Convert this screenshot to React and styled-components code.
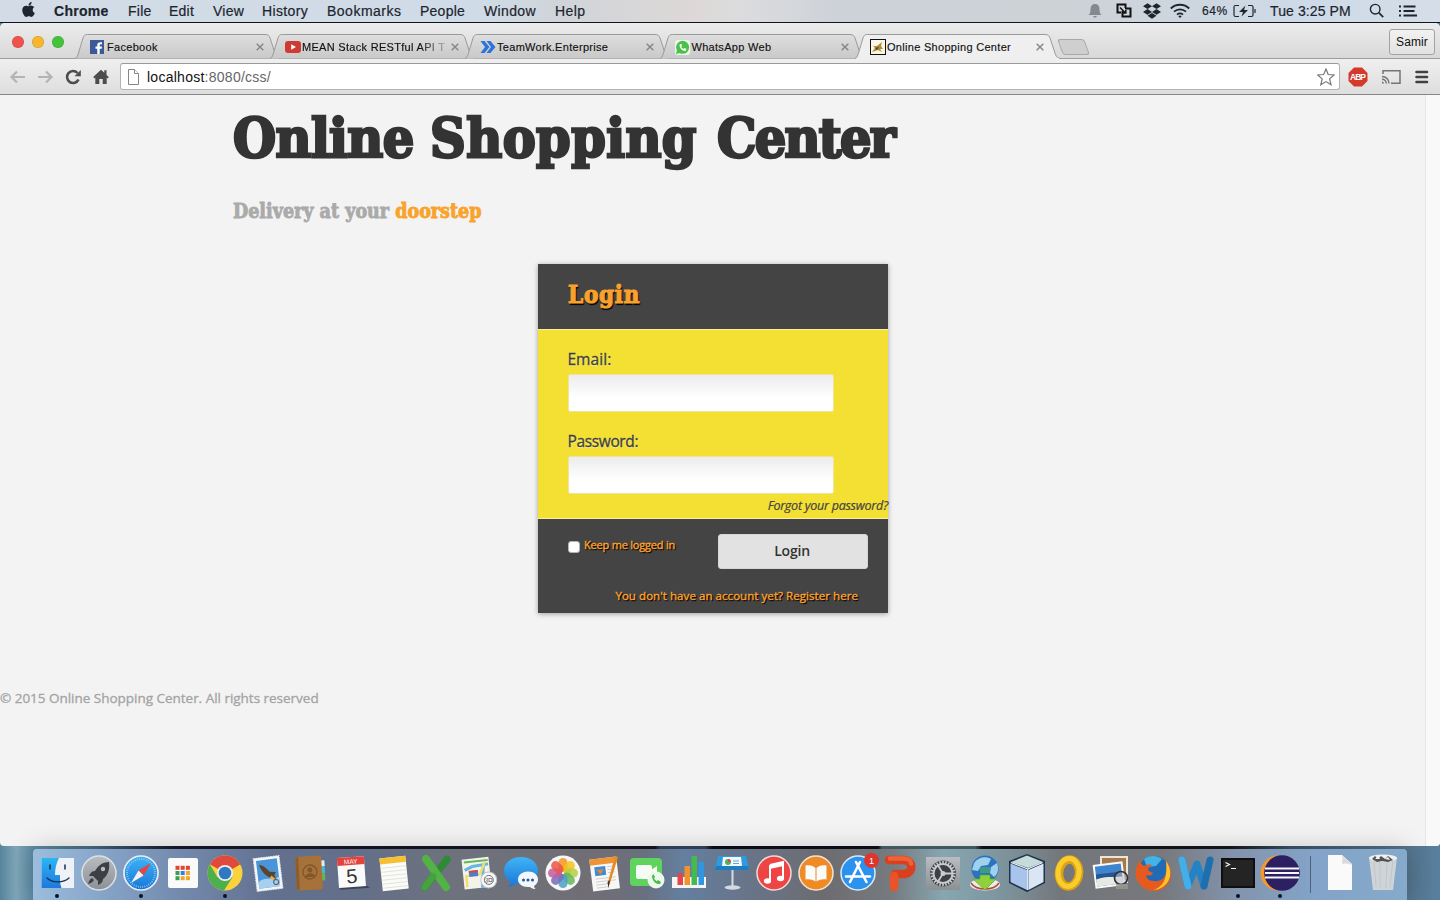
import React from 'react';
import styled, { createGlobalStyle } from 'styled-components';
import { FaApple, FaDropbox } from 'react-icons/fa';

const sans = '"Liberation Sans", Arial, sans-serif';
const humanist = '"Open Sans", "Noto Sans", sans-serif';
const slab = '"DejaVu Serif Condensed", "DejaVu Serif", serif';

const Global = createGlobalStyle`
  * { box-sizing: border-box; }
  body { margin: 0; overflow: hidden; font-family: ${sans}; }
  h1, h2, p { margin: 0; }
  svg { display: block; flex: none; }
`;

const Desktop = styled.div`
  width: 1440px;
  height: 900px;
  overflow: hidden;
  display: flex;
  flex-direction: column;
  background: linear-gradient(90deg, #55849b 0, #7fa6b9 16px, #5d8ba3 33px, #486b82 90px, #151a2b 175px, #11131f 655px, #34455d 660px, #34455d 705px, #0e0f16 712px, #0e0f16 878px, #4a626c 882px, #48606a 975px, #111319 982px, #15161c 1230px, #3c5366 1290px, #54738b 1405px, #58809e 1440px);
`;

/* ---------- menu bar ---------- */
const MenuBar = styled.header`
  height: 23px;
  flex: none;
  display: flex;
  align-items: center;
  padding-left: 20px;
  padding-right: 22px;
  border-bottom: 1px solid #10161e;
  background: linear-gradient(90deg, #d3dce6 0, #cfdbe7 480px, #d0d4d9 560px, #ddd8d7 690px, #dcdcde 740px, #cdd2d8 840px, #cdd2d7 1080px, #cddae7 1300px, #d5dee8 1440px);
  color: #1d252e;
`;
const MenuItem = styled.span`
  width: ${p => p.$w}px;
  margin-right: 19px;
  white-space: nowrap;
  font-size: 14px;
  line-height: 22px;
  letter-spacing: ${p => p.$ls || 0.25}px;
  font-weight: ${p => (p.$bold ? 700 : 400)};
  -webkit-text-stroke: 0.2px #1d252e;
`;
const AppleMark = styled.span`
  width: 34px;
  flex: none;
  margin-top: -3px;
`;
const StatusArea = styled.div`
  margin-left: auto;
  display: flex;
  align-items: center;
`;
const StatusSlot = styled.span`
  width: ${p => p.$w}px;
  display: flex;
  align-items: center;
  font-size: ${p => p.$size || 14}px;
  letter-spacing: ${p => p.$ls || 0}px;
  line-height: 22px;
  white-space: nowrap;
  -webkit-text-stroke: 0.2px #1d252e;
`;

/* ---------- browser window ---------- */
const Window = styled.section`
  height: 823px;
  flex: none;
  display: flex;
  flex-direction: column;
  border-radius: 5px 5px 4px 4px;
  overflow: hidden;
  background: #f3f3f3;
`;
const TabStrip = styled.div`
  height: 36px;
  flex: none;
  display: flex;
  align-items: flex-end;
  background: linear-gradient(#ececec, #d8d8d8);
  box-shadow: inset 0 -1px 0 #9c9c9c;
`;
const Lights = styled.div`
  width: 75px;
  height: 36px;
  padding: 13px 0 0 12px;
  display: flex;
  gap: 8px;
`;
const Light = styled.span`
  width: 12px;
  height: 12px;
  border-radius: 50%;
  background: ${p => p.$c};
  box-shadow: inset 0 0 0 0.5px rgba(0, 0, 0, 0.18);
`;
const Tab = styled.div`
  position: relative;
  z-index: ${p => p.$z};
  width: 210px;
  margin-right: -15px;
  height: 25px;
  flex: none;
  display: flex;
  align-items: center;
  padding: 1px 21px 0 15px;
`;
const TabShape = styled.svg`
  position: absolute;
  left: 0;
  top: 0;
  z-index: -1;
`;
const TabTitle = styled.span`
  flex: 1;
  white-space: nowrap;
  font-size: 11px;
  line-height: 16px;
  letter-spacing: 0.3px;
  margin-left: ${p => p.$gap}px;
  color: #111;
  -webkit-text-stroke: 0.15px #111;
  margin-right: 5px;
  ${p => p.$fade && 'mask-image: linear-gradient(90deg, #000 82%, transparent 104%);'}
`;
const NewTab = styled.span`
  width: 27px;
  height: 16px;
  margin: 0 0 4px 10px;
  border: 1px solid #a9a9a9;
  border-radius: 3px;
  background: #cfcfcf;
  transform: skewX(20deg);
`;
const Profile = styled.button`
  margin: 0 5px 4px auto;
  width: 46px;
  height: 26px;
  padding: 0;
  font: 12px ${sans};
  letter-spacing: 0.1px;
  color: #111;
  border: 1px solid #a2a2a2;
  border-radius: 3px;
  background: linear-gradient(#f2f2f2, #e2e2e2);
`;
const Toolbar = styled.div`
  height: 36px;
  flex: none;
  display: flex;
  align-items: center;
  padding: 0 9px;
  background: linear-gradient(#efefef, #dedede);
  border-bottom: 1px solid #878787;
`;
const NavSlot = styled.span`
  width: 28px;
  flex: none;
`;
const AddressBar = styled.div`
  width: 1220px;
  height: 27px;
  display: flex;
  align-items: center;
  margin-left: -1px;
  padding: 0 4px 0 6px;
  border: 1px solid #b3b3b3;
  border-top-color: #9a9a9a;
  border-radius: 3px;
  background: #fff;
`;
const Url = styled.span`
  flex: 1;
  margin-left: 7px;
  font-size: 14px;
  line-height: 24px;
  letter-spacing: 0.26px;
  color: #666;
  b { font-weight: 400; color: #111; }
`;
const Extensions = styled.div`
  display: flex;
  align-items: center;
  gap: 13px;
  margin-left: 8px;
`;

/* ---------- page ---------- */
const Viewport = styled.div`
  flex: 1;
  display: flex;
`;
const Page = styled.main`
  flex: 1;
  padding-top: 9px;
`;
const ScrollTrack = styled.div`
  width: 15px;
  border-left: 1px solid #e6e6e6;
  background: #f9f9f9;
`;
const Heading = styled.h1`
  display: flex;
  gap: 17px;
  margin-left: 233px;
  font: 700 55px/68px ${slab};
  color: #333;
  white-space: nowrap;
  -webkit-text-stroke: 2.6px #333;
  paint-order: stroke fill;
`;
const Word = styled.span`
  letter-spacing: ${p => p.$ls}px;
  width: ${p => p.$w}px;
`;
const Tagline = styled.h2`
  margin: 28px 0 0 233px;
  font: 700 19.5px/24px ${slab};
  letter-spacing: 0px;
  color: #aaa;
  -webkit-text-stroke: 0.8px currentColor;
  white-space: nowrap;
  span { color: #f9a32a; }
`;
const Card = styled.form`
  width: 350px;
  height: 349px;
  margin: 40px 0 0 538px;
  background: #444;
  box-shadow: 0 1px 5px rgba(0, 0, 0, 0.35);
`;
const CardTitle = styled.h2`
  height: 65px;
  padding: 16px 30px 0;
  font: 700 24px/30px ${slab};
  letter-spacing: 0.7px;
  color: #f9a12e;
  -webkit-text-stroke: 1.1px #f9a12e;
  text-shadow: 1px 1px 1px #000, 1px 2px 1px #000;
`;
const Fields = styled.div`
  height: 190px;
  padding: 18px 0 0 30px;
  background: #f4e032;
  border-top: 1px solid #f8f0a0;
  border-bottom: 1px solid #f8f0a0;
`;
const Label = styled.label`
  display: block;
  height: 26px;
  margin-left: -0.6px;
  font: 400 15.5px/22px ${humanist};
  letter-spacing: ${p => p.$ls || 0}px;
  color: #404040;
  -webkit-text-stroke: 0.3px #404040;
  text-shadow: 0 1px 1px rgba(255, 255, 255, 0.6);
`;
const Input = styled.input`
  display: block;
  width: 266px;
  height: 38px;
  margin-bottom: ${p => p.$mb}px;
  border: 1px solid #eee49a;
  border-radius: 2px;
  background: linear-gradient(#ececee, #fff 65%);
  outline: none;
`;
const Forgot = styled.p`
  text-align: right;
  font: italic 400 12.5px/18px ${humanist};
  letter-spacing: -0.25px;
  color: #444;
  -webkit-text-stroke: 0.2px #444;
  white-space: nowrap;
`;
const Actions = styled.div`
  height: 50px;
  padding: 15px 20px 0 30px;
  display: flex;
  align-items: flex-start;
`;
const Check = styled.input`
  appearance: none;
  width: 12px;
  height: 12px;
  margin: 7px 4px 0 0;
  border: 1px solid #b5b5b5;
  border-radius: 3px;
  background: #fff;
`;
const Small = styled.span`
  font: 400 ${p => p.$size || 11}px/16px ${humanist};
  letter-spacing: ${p => p.$ls}px;
  color: #f9a12e;
  white-space: nowrap;
  text-shadow: 1px 1px 1px #000, 1px 1px 1px #000;
  -webkit-text-stroke: 0.4px #f9a12e;
`;
const KeepText = styled(Small)`
  margin-top: 3px;
`;
const Submit = styled.button`
  margin-left: auto;
  width: 150px;
  height: 35px;
  padding: 0 2px 2px 0;
  border: 1px solid #d6d6d6;
  border-radius: 3px;
  background: #e2e2e2;
  font: 600 14px/20px ${humanist};
  letter-spacing: -0.2px;
  color: #333;
`;
const Register = styled.div`
  padding: 18px 30px 0;
  text-align: right;
  line-height: 16px;
`;
const Copyright = styled.footer`
  margin-top: 75px;
  font: 400 13.5px/20px ${humanist};
  letter-spacing: -0.02px;
  color: #a3a3a3;
  -webkit-text-stroke: 0.3px #a3a3a3;
`;

/* ---------- dock ---------- */
const Dock = styled.nav`
  width: 1374px;
  height: 51px;
  flex: none;
  margin: 3px 0 0 33px;
  padding: 3px 2px 0 2.5px;
  display: flex;
  border-radius: 4px 4px 0 0;
  box-shadow: 0 0 26px rgba(0, 0, 0, 0.2);
  background: linear-gradient(90deg, #9cbddd 0, #86a4c8 70px, #7389ac 150px, #62708f 240px, #646f88 330px, #6d727d 420px, #716e75 560px, #69707f 610px, #647f9f 650px, #68768e 700px, #6c6c70 790px, #767b80 860px, #87a6b1 910px, #7d949d 970px, #73767a 1030px, #77797d 1130px, #8393ac 1200px, #83a3c8 1280px, #86aacb 1374px);
`;
const DockItem = styled.div`
  width: 42.2px;
  height: 48px;
  flex: none;
  display: flex;
  flex-direction: column;
  align-items: center;
`;
const RunningDot = styled.i`
  width: 4px;
  height: 4px;
  border-radius: 50%;
  background: #07131f;
`;
const DockDivider = styled.i`
  width: 1px;
  height: 37px;
  margin: 4px 9px 0;
  background: #4e6178;
`;

const petals = ['#f7941d', '#f6c21c', '#b7cf3c', '#63b75c', '#4aa0c9', '#7a6bb8', '#c35aa0', '#ea5548'];
const gearTeeth = Array.from({ length: 24 }, (_, i) => i * 15);

const ic = {
  finder: (
    <>
      <path d="M5.500 6H38v30H5.500z" fill="#eef2f7" />
      <path d="M5.500 6H23c-3 6-4 11-4 17h5c0 5 0 9 1.500 13H5.500z" fill="url(#gFinder)" />
      <path d="M14 13v4M29 13v4" stroke="#12304f" strokeWidth="1.500" strokeLinecap="round" />
      <path d="M11 26c5 5 16 5.500 22 0" stroke="#12304f" strokeWidth="1.300" fill="none" strokeLinecap="round" />
    </>
  ),
  launchpad: (
    <>
      <circle cx="21" cy="21" r="17" fill="url(#gGrey)" stroke="#dde1e5" strokeWidth="1.500" />
      <path d="M31 10c-7 0-11 4-14 9-3 0-5 2-6 5l4 0 5 5 0 4c3-1 5-3 5-6 5-4 7-10 6-17zM14 26c-2 1-3 3-4 6 3-1 5-2 6-4z" fill="#3d4043" />
      <circle cx="25" cy="17" r="2.200" fill="#b9bcc0" />
    </>
  ),
  safari: (
    <>
      <circle cx="21" cy="21" r="17" fill="url(#gBlue)" stroke="#e9eef3" strokeWidth="1.700" />
      <circle cx="21" cy="21" r="14" fill="none" stroke="#9cd0f5" strokeWidth="2" strokeDasharray=".7 1.500" />
      <path d="M31 11L18.500 18.500l5 5z" fill="#e8433c" />
      <path d="M11 31l7.500-12.500 5 5z" fill="#f2f2f2" />
    </>
  ),
  apps: (
    <>
      <rect x="6" y="6" width="30" height="30" rx="2" fill="#fafafa" />
      {['#e2442f', '#e2442f', '#e2442f', '#35a05a', '#3a7de0', '#f0a62c', '#35a05a', '#f0a62c', '#f0a62c'].map((c, i) => (
        <rect key={i} x={13.500 + (i % 3) * 5.200} y={13.800 + Math.floor(i / 3) * 5.200} width="4" height="4" fill={c} />
      ))}
    </>
  ),
  chrome: (
    <>
      <circle cx="21" cy="21" r="17.500" fill="#fbd23c" />
      <path d="M21 21L5.800 12.300A17.500 17.500 0 0 1 36.200 12.300z" fill="#df4a3c" />
      <path d="M21 12.300h15.200L21 21z" fill="#df4a3c" />
      <path d="M5.800 12.300A17.500 17.500 0 0 0 20 38.500L28.500 25.300 21 21 13.500 25.300z" fill="#4faf4e" />
      <circle cx="21" cy="21" r="8" fill="#eef2f4" />
      <circle cx="21" cy="21" r="6.300" fill="#3079c0" />
    </>
  ),
  mail: (
    <g transform="rotate(-7 21 21)">
      <rect x="8" y="5" width="26" height="33" fill="#f5f6f8" stroke="#dfe5ea" strokeDasharray="1.500 1" />
      <rect x="10.500" y="7.500" width="21" height="28" fill="#4a95da" />
      <path d="M10.500 29c6-5 13 0 21-3v9.500h-21z" fill="#a7d0ee" />
      <path d="M13 12c5 1 7 5 10 8l6 1-2 3 2 5-6-3c-4-2-8-6-10-14z" fill="#5c4427" />
      <path d="M24 24l6 6-8-3z" fill="#e1ad4e" />
      <circle cx="28" cy="31" r="2.500" fill="none" stroke="#4d5b72" />
    </g>
  ),
  contacts: (
    <g transform="rotate(-3 21 21)">
      <path d="M32 9h4v6h-4z" fill="#e5edf1" /><path d="M32 15h4v7h-4z" fill="#47b8d3" /><path d="M32 22h4v7h-4z" fill="#62b854" />
      <rect x="7" y="4" width="26" height="34" rx="2" fill="#a6723a" />
      <path d="M7 6v30l3 2V4z" fill="#8c5d2d" />
      <circle cx="21" cy="20" r="7" fill="none" stroke="#80562a" strokeWidth="1.300" />
      <circle cx="21" cy="18" r="2.500" fill="#80562a" /><path d="M16 25c1-5 9-5 10 0z" fill="#80562a" />
    </g>
  ),
  calendar: (
    <g transform="rotate(-4 21 21)">
      <path d="M7 35h28l3 2H9z" fill="#3b4657" />
      <rect x="7" y="5" width="27" height="30" fill="#fafafa" />
      <rect x="7" y="5" width="27" height="8" fill="#e5423d" />
      <text x="20.500" y="11.800" fontSize="6.500" textAnchor="middle" fill="#fff" fontFamily="Liberation Sans">MAY</text>
      <text x="20.500" y="31" fontSize="20" textAnchor="middle" fill="#333" fontFamily="Liberation Sans">5</text>
    </g>
  ),
  notes: (
    <g transform="rotate(-6 21 21)">
      <rect x="8" y="5" width="26" height="33" fill="#fbfbf7" />
      <rect x="8" y="5" width="26" height="6" fill="#f6c033" />
      <path d="M8 15h26M8 19h26M8 23h26M8 27h26M8 31h26M8 35h26" stroke="#d9d9d5" strokeWidth=".7" />
    </g>
  ),
  excel: (
    <>
      <path d="M32 7.500L10 35" stroke="#2f8a35" strokeWidth="7.500" strokeLinecap="round" />
      <path d="M11 7l20 28" stroke="#53b246" strokeWidth="8" strokeLinecap="round" />
      <path d="M10 35l8-10.500" stroke="#45a33c" strokeWidth="7" strokeLinecap="round" />
    </>
  ),
  maps: (
    <g transform="rotate(-6 21 21)">
      <rect x="6" y="6" width="27" height="30" fill="#f2f4ec" />
      <path d="M8 9h24" stroke="#64b957" strokeWidth="2" />
      <path d="M8 17l8-3 16-1M24 36l3-22" stroke="#63b6df" strokeWidth="3" fill="none" />
      <path d="M9 34V23l14-1 6-12" stroke="#f3dc72" strokeWidth="2.500" fill="none" />
      <rect x="12" y="18" width="9" height="6" fill="#4e7ec9" /><path d="M12 18h9v2h-9z" fill="#d64843" />
      <circle cx="31" cy="29" r="8" fill="#f8f8f8" stroke="#b9c0c3" /><circle cx="31" cy="29" r="4.500" fill="none" stroke="#555" strokeWidth=".8" />
      <text x="31" y="31.200" fontSize="6" textAnchor="middle" fill="#444" fontFamily="Liberation Sans">3D</text>
    </g>
  ),
  messages: (
    <>
      <path d="M21 5c10 0 17 6 17 13.500S31 32 21 32c-2 0-3 0-5-.5-2 2-5 3.500-8 3.500 2-2 2.500-4 2-6C6 27 4 23 4 18.500 4 11 11 5 21 5z" fill="url(#gBlue)" />
      <path d="M28 19.500c6 0 10 3.300 10 8 0 3-1.500 5-4 6.500 0 1 .5 2 1.500 3-2 0-4-.5-5.500-2h-2c-6 0-10-3.300-10-7.500s4-8 10-8z" fill="#f3f6fa" />
      <g fill="#24579b"><circle cx="23.500" cy="28" r="1.500" /><circle cx="28" cy="28" r="1.500" /><circle cx="32.500" cy="28" r="1.500" /></g>
    </>
  ),
  photos: (
    <>
      <circle cx="21" cy="21" r="17.500" fill="#f7f7f5" />
      {petals.map((c, i) => (
        <rect key={c} x="16.500" y="6" width="9" height="14" rx="4.500" fill={c} opacity=".85" transform={`rotate(${i * 45} 21 21)`} />
      ))}
    </>
  ),
  pages: (
    <>
      <g transform="rotate(-7 21 21)">
        <rect x="7" y="6" width="27" height="32" fill="#f7f7f6" />
        <rect x="7" y="6" width="27" height="6" fill="#ee9434" />
        <rect x="11" y="14" width="11" height="9" fill="#438bd0" /><path d="M13 17h7l-3.500 5z" fill="#f08333" />
        <path d="M24 15h7M24 18h7M24 21h7M11 26h20M11 29h20M11 32h14M11 35h12" stroke="#c6c6c6" strokeWidth=".8" />
      </g>
      <path d="M34 5L26 31l-2 5 0-6L31 4z" fill="#e78a21" /><path d="M26 28l-1.500 8-1-6z" fill="#333" />
    </>
  ),
  facetime: (
    <>
      <rect x="4" y="6" width="32" height="28" rx="4" fill="#5fd35d" />
      <rect x="10" y="13" width="16" height="14" rx="2" fill="#f4fbf4" /><path d="M25 18l6-4v10l-6-4z" fill="#f4fbf4" />
      <circle cx="30" cy="28" r="8.500" fill="#edf8ec" />
      <path d="M26 24c0 5 4 8.500 8 8l1-2-3-2-1.500 1.200-2.500-2.700 1-1.500-1.500-3z" fill="#4eb94c" />
    </>
  ),
  numbers: (
    <>
      <path d="M4 25h34v11H4z" fill="#f4f5f6" />
      <rect x="9.500" y="21" width="5.500" height="12" fill="#e4444c" /><rect x="16.500" y="14" width="5.500" height="19" fill="#f0932f" />
      <rect x="23.500" y="4" width="5.500" height="29" fill="#45ba4e" /><rect x="30.500" y="10" width="5.500" height="23" fill="#2f97e2" />
    </>
  ),
  keynote: (
    <>
      <path d="M7 4h28l3 13H4z" fill="#2f9bdc" /><path d="M5 14h32l1 4H4z" fill="#1c7ec0" />
      <path d="M12 5h18l1 9H11z" fill="#f5f8fa" /><circle cx="17" cy="10" r="3" fill="#53af62" /><path d="M17 10V7a3 3 0 0 1 3 3z" fill="#e14b42" />
      <path d="M22 9h6M22 11.500h6" stroke="#62a6dc" />
      <path d="M20.500 18h2v17h-2z" fill="#d6dce1" /><ellipse cx="21.500" cy="35.500" rx="8" ry="2.200" fill="#d4dae0" />
    </>
  ),
  itunes: (
    <>
      <circle cx="21" cy="21" r="17" fill="#ee4443" stroke="#efdcda" strokeWidth="1.500" />
      <path d="M17 13l13-3v16.500M17 13v16" stroke="#fff" strokeWidth="2" fill="none" /><path d="M16.500 13l14-3v4l-14 3z" fill="#fff" />
      <ellipse cx="14.500" cy="29" rx="3.600" ry="2.800" fill="#fff" /><ellipse cx="27.500" cy="26.500" rx="3.600" ry="2.800" fill="#fff" />
    </>
  ),
  ibooks: (
    <>
      <circle cx="21" cy="21" r="17" fill="#f08a24" stroke="#f2e3d2" strokeWidth="1.500" />
      <path d="M20.500 16c-3-3-7-3-10-2.500v14c4-.5 7 0 10 2zM21.500 16c3-3 7-3 10-2.500v14c-4-.5-7 0-10 2z" fill="#fafafa" />
    </>
  ),
  appstore: (
    <>
      <circle cx="21" cy="21" r="17" fill="#2b92ef" stroke="#dfe9f2" strokeWidth="1.500" />
      <path d="M23 10L13 30M19 10l10.500 20M9 24.500h24" stroke="#fff" strokeWidth="2.600" strokeLinecap="round" />
      <circle cx="34.500" cy="8.500" r="7.500" fill="#e0352f" />
      <text x="34.500" y="12" fontSize="9" textAnchor="middle" fill="#fff" fontFamily="Liberation Sans">1</text>
    </>
  ),
  powerpoint: (
    <>
      <path d="M10 8h14c11 0 11 14 0 14h-8" stroke="#d8401f" strokeWidth="8.500" strokeLinecap="round" />
      <path d="M11 6.500h14c4 0 7 2 7 5" stroke="#ee6238" strokeWidth="4.500" strokeLinecap="round" />
      <path d="M15 24v11" stroke="#ea5229" strokeWidth="8.500" strokeLinecap="round" />
    </>
  ),
  settings: (
    <>
      <rect x="4" y="5" width="34" height="33" fill="url(#gGrey)" />
      <circle cx="21" cy="21.500" r="13" fill="#3d4144" />
      <circle cx="21" cy="21.500" r="9.500" fill="none" stroke="#c9cccf" strokeWidth="2" />
      {gearTeeth.map(a => <path key={a} d="M21 8.800v3" stroke="#c9cccf" strokeWidth="1.500" transform={`rotate(${a} 21 21.500)`} />)}
      <path d="M21 21.500h9M21 21.500l-5-8M21 21.500l-5 8" stroke="#c9cccf" strokeWidth="1.800" /><circle cx="21" cy="21.500" r="2.500" fill="#c9cccf" />
    </>
  ),
  download: (
    <>
      <ellipse cx="21" cy="32.500" rx="15" ry="6" fill="#e9ece8" /><path d="M7 31c5 8 23 8 28 0" stroke="#b64b30" strokeWidth="1.500" fill="none" />
      <circle cx="21" cy="17" r="13.500" fill="#2b73bf" />
      <path d="M10 11c4-6 12-7 17-4l-3 6-7 1-3 5-6-1zM27 15l6-4c2 6 1 11-3 14l-4-4z" fill="#9fd0ee" />
      <path d="M16 23h10v4h6L21 38 9 27h7z" fill="#8ed13c" stroke="#5fa327" strokeWidth=".7" />
      <path d="M16 15h10v6H16z" fill="#3d9a86" />
    </>
  ),
  cube: (
    <>
      <path d="M21 2l18 7v22L21 40 3 31V9z" fill="#1d3350" />
      <path d="M21 3.500L37 10l-15 6L5 10z" fill="#c5dcda" /><path d="M4.500 11.500L21 18v20L4.500 30z" fill="#a9c4ec" /><path d="M22.500 18l15-6.500V30l-15 8z" fill="#dae6f3" />
      <path d="M21.700 17v21M21.700 17L5 10.500M21.700 17l15-6.500" stroke="#f2f8fb" strokeWidth="1.200" fill="none" />
    </>
  ),
  outlook: (
    <g transform="rotate(6 21 21)">
      <ellipse cx="21" cy="21" rx="10" ry="13.500" fill="none" stroke="#dfa012" strokeWidth="8.500" />
      <ellipse cx="20.500" cy="20.500" rx="10.500" ry="14" fill="none" stroke="#f8cd2e" strokeWidth="5" />
    </g>
  ),
  preview: (
    <>
      <path d="M10 4h28v27H10z" fill="#ece6d8" /><path d="M12 6h24v22H12z" fill="#a4794b" />
      <g transform="rotate(-7 19 23)">
        <rect x="4" y="11" width="30" height="24" fill="#fafafa" /><rect x="6" y="13" width="26" height="20" fill="#3f85cd" />
        <path d="M6 21h26v5H6z" fill="#265594" /><path d="M6 26c8-3 16 0 26 0v7H6z" fill="#e9e9e3" />
      </g>
      <circle cx="31" cy="26" r="6.500" fill="rgba(190,200,210,.55)" stroke="#2e3134" strokeWidth="1.700" /><path d="M26 32h12v5H26z" fill="#9b978e" opacity=".8" />
    </>
  ),
  firefox: (
    <>
      <circle cx="22" cy="20" r="16" fill="#236ab4" /><path d="M12 7c5-4 13-4 18 0l-6 7-9 1z" fill="#43b3e5" />
      <path d="M8 8c-5 7-6 15-2 22 4 6 10 9 16 9 9 0 17-7 17-17 0-6-2-10-5-13 1 5 0 8 0 11-1 7-7 10-12 9-5 0-8-3-8-6 3 1 6 1 7-2-2-1-5-2-5-4 0-1 2-2 4-4-3-1-6 0-8 1-2-1-4-3-4-6z" fill="#e65a1f" />
      <path d="M34 9c6 8 6 19-2 25-4 3-8 4-11 4 10-3 15-11 13-29z" fill="#f9c52a" />
    </>
  ),
  word: (
    <>
      <path d="M7 8l6 26 9-22 7 22" fill="none" stroke="#2483c4" strokeWidth="7" strokeLinejoin="round" strokeLinecap="round" />
      <path d="M35 8l-6 26" stroke="#1e6fb0" strokeWidth="7" strokeLinecap="round" /><path d="M7 8l6 26" stroke="#46aee6" strokeWidth="7" strokeLinecap="round" />
    </>
  ),
  terminal: (
    <>
      <rect x="4" y="6" width="34" height="30" fill="#0f0f10" /><rect x="6" y="8" width="30" height="26" fill="#242425" />
      <path d="M8.500 10.500l4 2-4 2M14 16.500h5" stroke="#f5f5f5" strokeWidth="1.200" fill="none" />
    </>
  ),
  eclipse: (
    <>
      <circle cx="19" cy="21" r="17.500" fill="#f39a2d" /><circle cx="23" cy="21" r="17.800" fill="#2c2062" />
      <path d="M6 16.500h34M6 21h34M6 25.500h34" stroke="#f6f6fa" strokeWidth="2" />
    </>
  ),
  doc: (
    <>
      <path d="M8 3h14l10 9v26H8z" fill="#fafafa" /><path d="M22 3c1 5 0 8 0 9 3-1 7 0 10 1z" fill="#dadada" />
    </>
  ),
  trash: (
    <>
      <path d="M7 5h28l-4 33H11z" fill="#d6d8da" opacity=".92" /><path d="M12 8l2 27M18 9v27M25 9l-1 27M31 8l-3 27" stroke="#c3c6c9" />
      <ellipse cx="21" cy="6" rx="14" ry="3.500" fill="#eceeef" />
      <path d="M10 7l3-3 3 3 3-3 4 3 3-3 5 4-5 2-6-1-5 1z" fill="#53524f" /><path d="M13 7l3-3 2 3M23 7l3-2 2 3" fill="#f4f4f4" />
    </>
  ),
};

const dockApps = ['finder', 'launchpad', 'safari', 'apps', 'chrome', 'mail', 'contacts', 'calendar', 'notes', 'excel', 'maps', 'messages', 'photos', 'pages', 'facetime', 'numbers', 'keynote', 'itunes', 'ibooks', 'appstore', 'powerpoint', 'settings', 'download', 'cube', 'outlook', 'preview', 'firefox', 'word', 'terminal', 'eclipse'];
const running = ['finder', 'safari', 'chrome', 'terminal', 'eclipse'];

const GradientDefs = styled.svg`
  position: absolute;
`;
const Gradients = () => (
  <GradientDefs width="0" height="0">
    <defs>
      <linearGradient id="gFinder" x2="0" y2="1"><stop stopColor="#2bb6f5" /><stop offset="1" stopColor="#1f78dc" /></linearGradient>
      <linearGradient id="gBlue" x2="0" y2="1"><stop stopColor="#3fb4f5" /><stop offset="1" stopColor="#1a76d8" /></linearGradient>
      <linearGradient id="gGrey" x2="0" y2="1"><stop stopColor="#b9bdc1" /><stop offset="1" stopColor="#8b9095" /></linearGradient>
      <linearGradient id="gTab" x2="0" y2="1"><stop stopColor="#dedede" /><stop offset="1" stopColor="#c9c9c9" /></linearGradient>
    </defs>
  </GradientDefs>
);

const DockApp = ({ name }) => (
  <DockItem>
    <svg width="42" height="42" viewBox="0 0 42 42" fill="none">{ic[name]}</svg>
    {running.includes(name) && <RunningDot />}
  </DockItem>
);

const favicons = {
  facebook: <svg width="14" height="14"><path fill="#3d5a98" d="M0 0h14v14H0z" /><path d="M9.700 14V8.800h2l.3-2.200H9.700V5.300c0-.7.3-1.100 1.100-1.100H12V2.300c-3-.5-4.700.5-4.700 2.700v1.600H5.500v2.200h1.800V14z" fill="#fff" /></svg>,
  youtube: <svg width="16" height="14"><rect y="1" width="16" height="12" rx="3" fill="#cf3a33" /><path d="M6.200 4.200v5.600L11 7z" fill="#fff" /></svg>,
  teamwork: <svg width="16" height="16"><path d="M.5 2h4l5 6-5 6h-4l4.500-6z" fill="#2c74d8" /><path d="M6.500 2h4l5 6-5 6h-4l4.500-6z" fill="#2c74d8" /></svg>,
  whatsapp: <svg width="15" height="15" viewBox="0 0 15 15"><rect width="15" height="15" rx="3" fill="#eef6ec" /><circle cx="7.600" cy="7.300" r="6.500" fill="#4ac14a" /><path d="M1 14l1-4 3 3z" fill="#4ac14a" /><path d="M4.800 4c-1.200 3.500 2.500 7.500 6 6.700l.6-1.700-2-1-1 .9C7.300 8.500 6.600 7.700 6.200 6.800l.9-1L6.300 4z" fill="#fff" /></svg>,
  shop: <svg width="16" height="16"><rect x=".5" y=".5" width="15" height="15" fill="#fbf6e6" stroke="#111" /><path d="M2 13l3-4-2-2 4 0 5-4-1 4 2 3-3 0 2 3-4-2z" fill="#b08d3c" /><path d="M5 9l4-1-2 3z" fill="#54451d" /></svg>,
};

const BrowserTab = ({ icon, title, gap, active, fade, z }) => (
  <Tab $z={z}>
    <TabShape width="210" height="25">
      <path d="M-1 24.500C2 24.500 2.500 22 3.500 19L8 4C9 1.500 9.500 .5 12.500 .5H190C193 .5 194 1.500 195 4L200 19C201 22 202 24.500 206 24.500" fill={active ? '#efefef' : 'url(#gTab)'} stroke="#9a9a9a" />
      {active && <path d="M1 24.500h203" stroke="#efefef" />}
    </TabShape>
    {favicons[icon]}
    <TabTitle $gap={gap} $fade={fade}>{title}</TabTitle>
    <svg width="8" height="8"><path d="M.7.7l6.600 6.600M7.300.7L.7 7.300" stroke="#858585" strokeWidth="1.400" /></svg>
  </Tab>
);

export default function App() {
  return (
    <Desktop>
      <Global />
      <Gradients />
      <MenuBar>
        <AppleMark><FaApple size={17} /></AppleMark>
        <MenuItem $w={55} $bold $ls={0.3}>Chrome</MenuItem>
        <MenuItem $w={22}>File</MenuItem>
        <MenuItem $w={25}>Edit</MenuItem>
        <MenuItem $w={30}>View</MenuItem>
        <MenuItem $w={46} $ls={0.35}>History</MenuItem>
        <MenuItem $w={74} $ls={0.5}>Bookmarks</MenuItem>
        <MenuItem $w={45}>People</MenuItem>
        <MenuItem $w={52} $ls={0.35}>Window</MenuItem>
        <MenuItem $w={31} $ls={0.45}>Help</MenuItem>
        <StatusArea>
          <StatusSlot $w={28}><svg width="14" height="16"><path d="M7 1c3 0 4.500 2 4.500 5 0 3.500.5 4.500 2 6H.5c1.500-1.500 2-2.500 2-6C2.500 3 4 1 7 1zM5.200 13h3.600c-.3 2-3.300 2-3.600 0z" fill="#85898e" /></svg></StatusSlot>
          <StatusSlot $w={27}><svg width="16" height="16"><path d="M9.500 5V1.500h-8v8H5" fill="none" stroke="#111" strokeWidth="2" /><path d="M9 5.500h5.500v8h-8V8" fill="none" stroke="#111" strokeWidth="2" /><path d="M4 4.500L9.500 10M9.800 7V10H6.500" stroke="#111" strokeWidth="1.500" fill="none" /></svg></StatusSlot>
          <StatusSlot $w={27}><FaDropbox size={18} /></StatusSlot>
          <StatusSlot $w={32}><svg width="20" height="16" viewBox="0 0 20 16" fill="none" stroke="#1d252e" strokeWidth="1.800"><path d="M.8 5.500c5-5 13.400-5 18.400 0M4 8.700c3.500-3.200 8.500-3.200 12 0M7 11.600c1.800-1.500 4.200-1.500 6 0" /><path d="M8.300 13.200a2.500 2.500 0 0 1 3.400 0L10 15z" fill="#1d252e" stroke="none" /></svg></StatusSlot>
          <StatusSlot $w={31} $size={12} $ls={0.6}>64%</StatusSlot>
          <StatusSlot $w={37}><svg width="24" height="14" fill="none" stroke="#1d252e" strokeWidth="1.200"><path d="M6 1.500H2.500c-1 0-1.500.5-1.500 1.500v8c0 1 .5 1.500 1.500 1.500H6M15 1.500h3.500c1 0 1.500.5 1.500 1.500v8c0 1-.5 1.500-1.500 1.500H15M22 5v4" /><path d="M12.500 1.500L6 8h4l-1.500 4.500L15 6h-4z" fill="#1d252e" stroke="none" /></svg></StatusSlot>
          <StatusSlot $w={99} $ls={0.1}>Tue 3:25 PM</StatusSlot>
          <StatusSlot $w={30}><svg width="16" height="16" fill="none" stroke="#1d252e" strokeWidth="1.400"><circle cx="6.200" cy="6.200" r="4.800" /><path d="M9.700 9.700l4.500 4.500" strokeWidth="1.700" /></svg></StatusSlot>
          <StatusSlot $w={19}><svg width="19" height="12" stroke="#1d252e" strokeWidth="1.800"><path d="M0 1.500h2M4.500 1.500h12M0 6h2M4.500 6h11M0 10.500h2M4.500 10.500H18" /></svg></StatusSlot>
        </StatusArea>
      </MenuBar>

      <Window>
        <TabStrip>
          <Lights><Light $c="#ee544d" /><Light $c="#f8b62d" /><Light $c="#43c338" /></Lights>
          <BrowserTab z={1} icon="facebook" title="Facebook" gap={3} />
          <BrowserTab z={2} icon="youtube" title="MEAN Stack RESTful API T" gap={1} fade />
          <BrowserTab z={3} icon="teamwork" title="TeamWork.Enterprise" gap={1} />
          <BrowserTab z={4} icon="whatsapp" title="WhatsApp Web" gap={1.500} />
          <BrowserTab z={5} icon="shop" title="Online Shopping Center" gap={1} active />
          <NewTab />
          <Profile>Samir</Profile>
        </TabStrip>
        <Toolbar>
          <NavSlot><svg width="16" height="16" fill="none" stroke="#b4b4b4" strokeWidth="2.200"><path d="M16 8H3M8 2.500L2.500 8 8 13.500" /></svg></NavSlot>
          <NavSlot><svg width="18" height="16" fill="none" stroke="#b4b4b4" strokeWidth="2.200"><path d="M1 8h13M9 2.500L14.500 8 9 13.500" /></svg></NavSlot>
          <NavSlot><svg width="17" height="16" fill="none" stroke="#4c4c4c" strokeWidth="2.600"><path d="M13.500 10.500A6 6 0 1 1 12.500 4" /><path d="M15.800 1v6.200H9.500z" fill="#4c4c4c" stroke="none" /></svg></NavSlot>
          <NavSlot><svg width="16" height="16" fill="#4c4c4c"><path d="M8 .8l3.300 3V1.200h2.200v4.700l2.300 2.200-1.200 1.300-.9-.8V15H9.700v-5H6.300v5H2.300V8.600l-.9.8L.2 8.100z" /></svg></NavSlot>
          <AddressBar>
            <svg width="13" height="16" fill="#fff" stroke="#858585"><path d="M1.500.5h6l4 4v11h-10z" /><path d="M7.500.5v4h4" /></svg>
            <Url><b>localhost</b>:8080/css/</Url>
            <svg width="18" height="18" fill="none" stroke="#777" strokeWidth="1.200"><path d="M9 1l2.200 5.500 5.900.5-4.500 3.900 1.400 5.800L9 13.600l-5.200 3.100 1.400-5.800L.7 7l5.900-.5z" /></svg>
          </AddressBar>
          <Extensions>
            <svg width="20" height="20"><path d="M6 .5h8L19.500 6v8L14 19.500H6L.5 14V6z" fill="#d33a2c" /><text x="10" y="13.400" textAnchor="middle" fontFamily="Liberation Sans" fontWeight="700" fontSize="8.500" textLength="16" fill="#fff">ABP</text></svg>
            <svg width="20" height="16" fill="none" stroke="#757575" strokeWidth="1.500"><path d="M2 5V1.700h17v12.500h-9" /><path d="M1 7.500c4 0 7 3 7 7M1 10.200c2.400 0 4.300 1.900 4.300 4.300" /><path d="M1 12.500c1.200 0 2 1 2 2H1z" fill="#757575" stroke="none" /></svg>
            <svg width="15" height="14" stroke="#414141" strokeWidth="2.600" strokeLinecap="round"><path d="M2.500 2h10.500M2.500 7h10.500M2.500 12h10.500" /></svg>
          </Extensions>
        </Toolbar>
        <Viewport>
          <Page>
            <Heading>
              <Word $w={180} $ls={-0.6}>Online</Word>
              <Word $w={270} $ls={0.45}>Shopping</Word>
              <Word $w={180} $ls={-1.7}>Center</Word>
            </Heading>
            <Tagline>Delivery at your <span>doorstep</span></Tagline>
            <Card>
              <CardTitle>Login</CardTitle>
              <Fields>
                <Label htmlFor="email" $ls={0.1}>Email:</Label>
                <Input id="email" $mb={18} />
                <Label htmlFor="password" $ls={-0.35}>Password:</Label>
                <Input id="password" type="password" $mb={3} />
                <Forgot>Forgot your password?</Forgot>
              </Fields>
              <Actions>
                <Check type="checkbox" />
                <KeepText $ls={-0.2}>Keep me logged in</KeepText>
                <Submit type="button">Login</Submit>
              </Actions>
              <Register><Small $size={11.5} $ls={0.06}>You don't have an account yet? Register here</Small></Register>
            </Card>
            <Copyright>© 2015 Online Shopping Center. All rights reserved</Copyright>
          </Page>
          <ScrollTrack />
        </Viewport>
      </Window>

      <Dock>
        {dockApps.map(name => <DockApp key={name} name={name} />)}
        <DockDivider />
        <DockApp name="doc" />
        <DockApp name="trash" />
      </Dock>
    </Desktop>
  );
}
